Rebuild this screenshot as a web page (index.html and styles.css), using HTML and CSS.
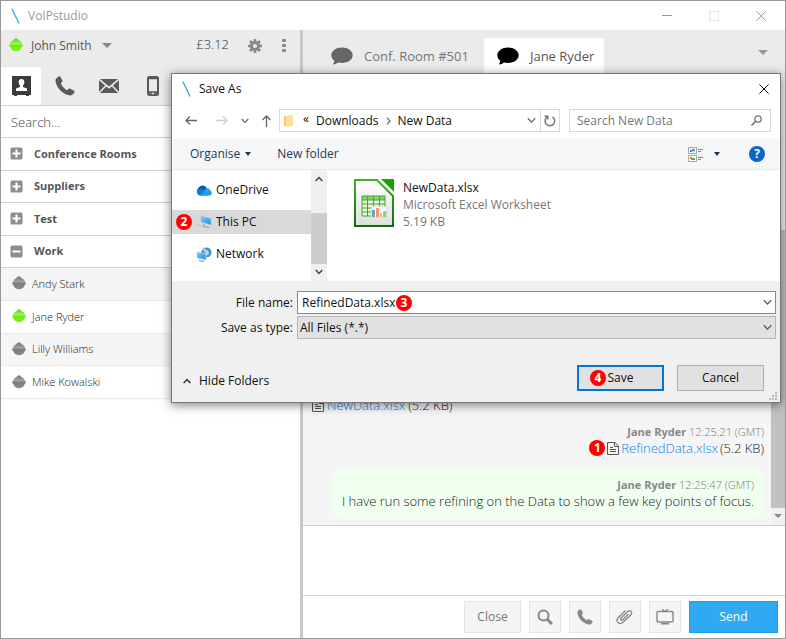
FILE: index.html
```html
<!DOCTYPE html>
<html lang="en">
<head>
<meta charset="utf-8">
<title>VoIPstudio</title>
<link rel="stylesheet" href="styles.css">
</head>
<body>
<svg class="defs" aria-hidden="true">
  <defs>
    <linearGradient id="grey-orb" x1="0" y1="0" x2="0" y2="1"><stop offset="0" stop-color="#777"/><stop offset=".42" stop-color="#a2a2a2"/><stop offset=".55" stop-color="#7c7c7c"/><stop offset="1" stop-color="#8c8c8c"/></linearGradient>
    <linearGradient id="green-orb" x1="0" y1="0" x2="0" y2="1"><stop offset="0" stop-color="#5fcf1c"/><stop offset=".42" stop-color="#9cf562"/><stop offset=".55" stop-color="#6aec08"/><stop offset="1" stop-color="#7df320"/></linearGradient>
    <linearGradient id="sheet" x1="0" y1="0" x2="0" y2="1"><stop offset="0" stop-color="#fff"/><stop offset="1" stop-color="#dedede"/></linearGradient>
    <linearGradient id="sheet-edge" x1="0" y1="0" x2="0" y2="1"><stop offset="0" stop-color="#43b02a"/><stop offset="1" stop-color="#0e6b0e"/></linearGradient>
    <linearGradient id="screen" x1="0" y1="0" x2="1" y2="1"><stop offset="0" stop-color="#6fd0ff"/><stop offset="1" stop-color="#1e8fe0"/></linearGradient>
    <symbol id="orb" viewBox="0 0 14 15"><path d="M5.700 .5H8.300L9.200 1.800 11.800 3.600 14 7.300 12.500 9.500A5.900 5.900 0 0 1 1.500 9.500L0 7.300 2.200 3.600 4.800 1.800Z"/></symbol>
    <symbol id="bubble" viewBox="0 0 22 18"><path d="M11 .5C17 .5 21.700 4 21.700 8.300S17 16 11 16C9.600 16 8.200 15.800 7 15.500 5.600 16.800 3.900 17.500 1.600 17.500 2.700 16.500 3.200 15.300 3.200 13.700 1.400 12.300.3 10.400.3 8.300.3 4 5 .5 11 .5Z"/></symbol>
    <symbol id="phone" viewBox="0 0 20 20"><path d="M3.500.7C4.400.1 5 .3 5.500 1.100L7.300 4.300C7.700 5 7.600 5.600 7 6.100L5.900 7C6.500 9.700 9.500 13 12.300 14.200L13.300 13C13.800 12.400 14.400 12.300 15.100 12.700L18.700 14.600C19.500 15.100 19.700 15.700 19.300 16.500 18.400 18.500 16.300 19.700 14 19.300 7 17.800.9 11 .5 4.500.4 2.800 1.800 1.400 3.500.7Z"/></symbol>
    <symbol id="file" viewBox="0 0 12 13"><path d="M1 .5H8L11.500 4V12.500H.5V.5H2M7.500 1V4.500H11M3 5.500H6M3 7.500H9M3 9.500H9" fill="none" stroke="#555"/></symbol>
    <symbol id="slash" viewBox="0 0 9 16"><path d="M.8.5 8 15.500" stroke="#2daede" stroke-width="1.300"/></symbol>
    <symbol id="chev" viewBox="0 0 8 6"><path d="M.7 1 4 4.500 7.300 1" fill="none" stroke="currentColor" stroke-width="1.100"/></symbol>
    <symbol id="cross" viewBox="0 0 10 10"><path d="M.4.4 9.600 9.600M9.600.4.4 9.600" stroke="currentColor"/></symbol>
    <symbol id="plus" viewBox="0 0 13 13"><rect x=".5" y=".5" width="12" height="12" rx="1.500" fill="#8d8d8d"/><path d="M6.500 2.500V10.500M2.500 6.500H10.500" stroke="#fff" stroke-width="2"/></symbol>
    <symbol id="minus" viewBox="0 0 13 13"><rect x=".5" y=".5" width="12" height="12" rx="1.500" fill="#8d8d8d"/><path d="M2.500 6.500H10.500" stroke="#fff" stroke-width="2"/></symbol>
  </defs>
</svg>

<div class="window">
  <header class="titlebar">
    <svg width="9" height="16"><use href="#slash"/></svg>
    <h1>VoIPstudio</h1>
    <div class="window-controls">
      <button aria-label="Minimise"><svg width="10" height="10"><path d="M0 4.500H10" stroke="#999"/></svg></button>
      <button aria-label="Maximise"><svg width="10" height="10"><rect x=".5" y=".5" width="9" height="9" fill="none" stroke="#e4e4e4"/></svg></button>
      <button aria-label="Close window"><svg width="10" height="10"><use href="#cross"/></svg></button>
    </div>
  </header>

  <div class="columns">
    <aside class="sidebar">
      <div class="account">
        <svg width="14" height="15" fill="url(#green-orb)"><use href="#orb"/></svg>
        <button class="account-name">John Smith <svg width="10" height="5"><path d="M0 0H10L5 5Z" fill="#888"/></svg></button>
        <span class="balance">£3.12</span>
        <button class="gear" aria-label="Settings"><svg width="14" height="14" viewBox="0 0 14 14"><circle cx="7" cy="7" r="3.600" fill="none" stroke="#888" stroke-width="3"/><path d="M7 0V3M7 11V14M0 7H3M11 7H14M2 2 4 4M10 10 12 12M12 2 10 4M4 10 2 12" stroke="#888" stroke-width="2.600"/></svg></button>
        <button aria-label="More"><svg width="4" height="13" fill="#888"><rect width="4" height="3" rx="1"/><rect y="5" width="4" height="3" rx="1"/><rect y="10" width="4" height="3" rx="1"/></svg></button>
      </div>
      <nav class="modes">
        <button class="active" aria-label="Contacts"><svg width="19" height="20" viewBox="0 0 19 20"><path d="M0 0H19V19H17V20H14V19H5V20H2V19H0Z" fill="#3b3b3b"/><path d="M9.500 3C11.700 3 12.600 4.600 12.300 6.700 12.100 8 11.600 8.800 11 9.500V11L15 12.600V15H4V12.600L8 11V9.500C7.400 8.800 6.900 8 6.700 6.700 6.400 4.600 7.300 3 9.500 3Z" fill="#fff"/></svg></button>
        <button aria-label="Calls"><svg width="20" height="20" fill="#5a5a5a"><use href="#phone"/></svg></button>
        <button aria-label="Messages"><svg width="20" height="14" viewBox="0 0 20 14"><path d="M1 0H19L10 7.500ZM0 1.200 6.200 6.600 0 12.800ZM20 1.200V12.800L13.800 6.600ZM7.200 7.500 10 9.800 12.800 7.500 19 14H1Z" fill="#5a5a5a"/></svg></button>
        <button aria-label="Mobile"><svg width="12" height="20" viewBox="0 0 12 20"><rect x="1" y="1" width="10" height="18" rx="1.500" fill="none" stroke="#5a5a5a" stroke-width="2"/><path d="M1 2H11M1 16.500H11" stroke="#5a5a5a" stroke-width="2.500"/><circle cx="6" cy="17.500" r="1" fill="#ddd"/></svg></button>
      </nav>
      <input class="contact-search" type="search" placeholder="Search..." aria-label="Search contacts">
      <ul class="groups">
        <li><button><svg width="13" height="13"><use href="#plus"/></svg>Conference Rooms</button></li>
        <li><button><svg width="13" height="13"><use href="#plus"/></svg>Suppliers</button></li>
        <li><button><svg width="13" height="13"><use href="#plus"/></svg>Test</button></li>
        <li><button><svg width="13" height="13"><use href="#minus"/></svg>Work</button></li>
      </ul>
      <ul class="contacts">
        <li><svg width="14" height="15" fill="url(#grey-orb)"><use href="#orb"/></svg>Andy Stark</li>
        <li><svg width="14" height="15" fill="url(#green-orb)"><use href="#orb"/></svg>Jane Ryder</li>
        <li><svg width="14" height="15" fill="url(#grey-orb)"><use href="#orb"/></svg>Lilly Williams</li>
        <li><svg width="14" height="15" fill="url(#grey-orb)"><use href="#orb"/></svg>Mike Kowalski</li>
      </ul>
    </aside>

    <main class="conversation">
      <nav class="tabs">
        <button><svg width="22" height="18" fill="#666"><use href="#bubble"/></svg>Conf. Room #501</button>
        <button class="active"><svg width="22" height="18"><use href="#bubble"/></svg>Jane Ryder</button>
        <button class="more-tabs" aria-label="More tabs"><svg width="10" height="5"><path d="M0 0H10L5 5Z" fill="#999"/></svg></button>
      </nav>
      <div class="chat">
        <div class="messages">
          <p class="incoming"><svg width="12" height="13"><use href="#file"/></svg><a href="#">NewData.xlsx</a> (5.2 KB)</p>
          <article class="outgoing">
            <p class="meta"><b>Jane Ryder</b> 12:25:21 (GMT)</p>
            <p class="attachment"><span class="step">1</span><svg width="12" height="13"><use href="#file"/></svg><a href="#">RefinedData.xlsx</a> (5.2 KB)</p>
          </article>
          <article class="outgoing speech">
            <p class="meta"><b>Jane Ryder</b> 12:25:47 (GMT)</p>
            <p>I have run some refining on the Data to show a few key points of focus.</p>
          </article>
        </div>
        <div class="chat-scroll"><div></div><svg width="8" height="4"><path d="M0 0H8L4 4Z" fill="#888"/></svg></div>
      </div>
      <textarea class="compose" aria-label="Message"></textarea>
      <footer class="actions">
        <button class="close">Close</button>
        <button aria-label="Search"><svg width="16" height="16"><circle cx="6.500" cy="6.500" r="5" fill="none" stroke="#888" stroke-width="2"/><path d="M10 10 15 15" stroke="#888" stroke-width="3"/></svg></button>
        <button aria-label="Call"><svg width="16" height="16" fill="#888"><use href="#phone"/></svg></button>
        <button aria-label="Attach"><svg width="18" height="16" viewBox="0 0 18 16" fill="none" stroke="#888" stroke-width="1.300"><path d="M12.500 5 6.800 10.700C5.500 12 3.800 10.400 5.100 9L11.700 2.500C14 .4 17 3.400 14.900 5.700L7 13.300C3.500 16.500-1 12.400 2.200 8.800L9.500 1.500"/></svg></button>
        <button aria-label="Share screen"><svg width="18" height="16" viewBox="0 0 18 16" fill="none" stroke="#888" stroke-width="1.400"><rect x="1" y="2.500" width="16" height="10.500" rx="1"/><path d="M6 0 9 2.500 12 0M5 14.800H13"/></svg></button>
        <button class="send">Send</button>
      </footer>
    </main>
  </div>

  <section class="dialog" role="dialog" aria-labelledby="dialog-title">
    <header class="dialog-title">
      <svg width="9" height="16"><use href="#slash"/></svg>
      <h2 id="dialog-title">Save As</h2>
      <button aria-label="Close dialog"><svg width="10" height="10"><use href="#cross"/></svg></button>
    </header>
    <div class="location">
      <button aria-label="Back"><svg width="12" height="9"><path d="M5 .5 1 4.500 5 8.500M1 4.500H12" fill="none" stroke="#666" stroke-width="1.300"/></svg></button>
      <button aria-label="Forward"><svg width="12" height="9"><path d="M7 .5 11 4.500 7 8.500M11 4.500H0" fill="none" stroke="#ccc" stroke-width="1.300"/></svg></button>
      <button aria-label="Recent"><svg width="8" height="6"><use href="#chev"/></svg></button>
      <button aria-label="Up"><svg width="9" height="12"><path d="M.5 5 4.500 1 8.500 5M4.500 1V12" fill="none" stroke="#666" stroke-width="1.300"/></svg></button>
      <div class="address">
        <svg width="10" height="12"><path d="M0 1H6V11H0Z" fill="#f5c95b"/><path d="M2 1 5 0H9V11L4 12H2Z" fill="#ffe19a"/></svg>
        <span class="hops">«</span>
        <a href="#">Downloads</a>
        <svg class="hop" width="5" height="8"><path d="M1 .7 4 4 1 7.300" fill="none" stroke="#666" stroke-width="1.200"/></svg>
        <a href="#">New Data</a>
        <button class="history" aria-label="Previous locations"><svg width="9" height="7"><use href="#chev"/></svg></button>
        <button class="refresh" aria-label="Refresh"><svg width="12" height="12" fill="none" stroke="#777" stroke-width="1.500"><path d="M8.500 1.900A4.800 4.800 0 1 1 3 2.100M.5 1.200H3.800V4.500"/></svg></button>
      </div>
      <div class="file-search">
        <input type="text" placeholder="Search New Data" aria-label="Search New Data">
        <svg width="11" height="11" fill="none" stroke="#777"><circle cx="7" cy="4" r="3.200" stroke-width="1.300"/><path d="M4.800 6.200.5 10.500" stroke-width="1.600"/></svg>
      </div>
    </div>
    <div class="commands">
      <button>Organise <svg width="6" height="4"><path d="M0 0H6L3 4Z" fill="#1b3358"/></svg></button>
      <button>New folder</button>
      <button class="views" aria-label="Change view"><svg width="15" height="15" viewBox="0 0 15 15"><g fill="#fff" stroke="#aaa"><rect x=".5" y=".5" width="8" height="6"/><rect x=".5" y="8.500" width="8" height="6"/></g><path d="M2 4.500H7V2H4Z" fill="#46a5e8"/><path d="M2 3 4 5H2Z" fill="#1862b1"/><path d="M2 10H4V12H2Z" fill="#e46b2d"/><path d="M4 11H7V13H3Z" fill="#4eaf3e"/><path d="M10 2.500H15M10 4.500H13M10 10.500H15M10 12.500H13" stroke="#888"/></svg></button>
      <button class="view-menu" aria-label="View options"><svg width="6" height="4"><path d="M0 0H6L3 4Z" fill="#1b3358"/></svg></button>
      <button class="help" aria-label="Help">?</button>
    </div>
    <div class="browser">
      <ul class="places">
        <li><svg width="16" height="11" viewBox="0 0 16 11"><path d="M4 10A4 4 0 0 1 2 3.500C3 1 8-2 11 3.500Z" fill="#0a56b0"/><path d="M3 10.500A3.500 3.500 0 0 1 3.500 4C6 3 9 5 13 10.500Z" fill="#1279d2"/><path d="M8 6C10 2 14 3 14 5.500 16.500 6 16.500 10.500 13.500 10.500H4Z" fill="#249de8"/></svg>OneDrive</li>
        <li class="selected"><span class="step">2</span><svg width="16" height="14" viewBox="0 0 16 14"><path d="M5 1 15 3.500V10L5 7Z" fill="url(#screen)" stroke="#acc5d5" stroke-width=".7"/><path d="M8 9V11.500L13 12.500" stroke="#8a949a" fill="none"/><path d="M0 9 7 12M2 8.500 9 12.500" stroke="#c1c9cd"/></svg>This PC</li>
        <li><svg width="16" height="15" viewBox="0 0 16 15"><circle cx="10.500" cy="5.500" r="5" fill="#4290bd"/><path d="M7 2C10 0 9 4 12 3L13 7 10 9Z" fill="#add7e8"/><path d="M1 5 10 7V13L1 11Z" fill="url(#screen)" stroke="#c0dae8" stroke-width=".7"/><path d="M3 13.500 8 14.500" stroke="#789"/></svg>Network</li>
      </ul>
      <div class="places-scroll">
        <svg width="8" height="6"><path d="M.7 5 4 1.500 7.300 5" fill="none" stroke="#444" stroke-width="1.500"/></svg>
        <div></div>
        <svg width="8" height="6"><path d="M.7 1 4 4.500 7.300 1" fill="none" stroke="#444" stroke-width="1.500"/></svg>
      </div>
      <div class="files">
        <svg width="40" height="48" viewBox="0 0 40 48"><path d="M1 1H23L39 17V47H1Z" fill="url(#sheet)" stroke="url(#sheet-edge)" stroke-width="2"/><path d="M27 0H40V13Z" fill="#18a303"/><path d="M8 17H31V37H8Z" fill="#e7f8df"/><path d="M8 17H31V21H8Z" fill="#8bd36f"/><path d="M8 17H31V37H8ZM13.500 17V37M19.500 17V37M25.500 17V37M8 21H31M8 25H31M8 29H31M8 33H31" fill="none" stroke="#43a52a"/><rect x="17.500" y="27.500" width="15" height="11" fill="#fff" stroke="#ddd"/><path d="M18 31H21V38H18Z" fill="#729fcf"/><path d="M22 29H25V38H22Z" fill="#ef9a72"/><path d="M26 34H28V38H26Z" fill="#f3bd3f"/><path d="M29 32H32V38H29Z" fill="#8bd36f"/></svg>
        <div class="file-text">
          <p class="file-name">NewData.xlsx</p>
          <p>Microsoft Excel Worksheet</p>
          <p>5.19 KB</p>
        </div>
      </div>
    </div>
    <form class="save-form">
      <div class="fields">
        <label for="file-name">File name:</label>
        <div class="combo">
          <input id="file-name" type="text" value="RefinedData.xlsx">
          <span class="step">3</span>
          <svg width="9" height="7"><use href="#chev"/></svg>
        </div>
        <label for="file-type">Save as type:</label>
        <div class="combo type">
          <select id="file-type"><option>All Files (*.*)</option></select>
          <svg width="9" height="7"><use href="#chev"/></svg>
        </div>
      </div>
      <div class="buttons">
        <button type="button" class="hide"><svg width="8" height="6"><path d="M.7 5 4 1.500 7.300 5" fill="none" stroke="#333" stroke-width="1.500"/></svg>Hide Folders</button>
        <button type="button" class="push primary"><span class="step">4</span>Save</button>
        <button type="button" class="push">Cancel</button>
      </div>
      <svg class="grip" width="9" height="9" fill="#b8b8b8"><path d="M6 0H8V2H6ZM3 3H5V5H3ZM6 3H8V5H6ZM0 6H2V8H0ZM3 6H5V8H3ZM6 6H8V8H6Z"/></svg>
    </form>
  </section>
</div>
</body>
</html>
```
FILE: styles.css
```css
* { box-sizing: border-box; }
body { margin: 0; font: 12px/16px "Open Sans", "Noto Sans", sans-serif; color: #555; }
h1, h2, p, ul { margin: 0; padding: 0; font: inherit; }
ul { list-style: none; }
button { display: flex; align-items: center; justify-content: center; padding: 0; border: 0; background: none; font: inherit; color: inherit; }
input, select, textarea { font: inherit; color: inherit; border: 0; border-radius: 0; outline: 0; min-width: 0; }
svg { display: block; flex: none; }
a { text-decoration: none; color: inherit; }
.defs { position: absolute; width: 0; height: 0; }

.window { position: relative; display: flex; flex-direction: column; height: 100vh; border: 1px solid #999; background: #fff; overflow: hidden; }
.titlebar { display: flex; align-items: center; height: 29px; padding: 0 19px 0 10px; gap: 8px; color: #999; flex: none; }
.window-controls { display: flex; gap: 37px; margin-left: auto; }
.columns { display: flex; flex: 1; min-height: 0; }

/* Contacts sidebar */
.sidebar { width: 302px; flex: none; border-right: 3px solid #c8c8c8; }
.account { display: flex; align-items: center; height: 37px; padding: 0 14px 6px 8px; background: #ebebeb; }
.account-name { gap: 10px; margin-left: 8px; }
.balance { margin-left: auto; font-size: 13px; font-weight: 300; padding-bottom: 4px; color: #333; }
.gear { margin: 0 20px 0 19px; }
.modes { display: flex; gap: 4px; background: #ebebeb; border-bottom: 1px solid #d0d0d0; }
.modes button { width: 40px; height: 38px; }
.modes .active { background: #fff; }
.contact-search { display: block; width: 100%; height: 32px; padding: 0 10px; font-size: 13px; font-weight: 300; border-bottom: 1px solid #d0d0d0; appearance: none; background: #fff; }
.contact-search::placeholder { color: #444; }
.groups { display: grid; grid-template-rows: repeat(4, 1fr); min-height: 130px; font-size: 11px; font-weight: 700; }
.groups li { display: flex; border-bottom: 1px solid #d0d0d0; }
.groups button { gap: 11px; padding: 0 10px 0 9px; }
.contacts { display: grid; grid-template-rows: repeat(4, 1fr); min-height: 131px; font-size: 11px; font-weight: 300; color: #222; }
.contacts li { display: flex; align-items: center; gap: 6px; padding: 0 11px; border-bottom: 1px solid #eaeaea; }
.contacts li:nth-child(odd) { background: #f5f5f5; }

/* Conversation */
.conversation { display: flex; flex-direction: column; flex: 1; min-width: 0; }
.tabs { display: flex; padding: 8px 17px 0 18px; background: #ebebeb; font-size: 13px; }
.tabs button { gap: 11px; height: 36px; padding: 0 10px 0 13px; }
.tabs button:first-child { padding: 0 15px 0 10px; color: #777; }
.tabs .active { background: #fff; }
.tabs .more-tabs { margin-left: auto; padding: 0 0 8px; }
.chat { display: flex; flex: 1; min-height: 0; background: #f5f5f5; border-bottom: 1px solid #d0d0d0; }
.messages { display: flex; flex-direction: column; justify-content: flex-end; flex: 1; padding: 0 7px 6px 9px; font-size: 13px; font-weight: 300; color: #222; overflow: hidden; }
.messages a { color: #007ff0; }
.messages .incoming { display: flex; align-items: center; gap: 3px; }
.messages article { align-self: flex-end; text-align: right; }
.incoming { margin-bottom: 11px; }
.meta { font-size: 11px; color: #777; }
.meta b { font-weight: 700; color: #888; }
.attachment { display: flex; align-items: center; justify-content: flex-end; gap: 2px; }
.speech { margin-top: 11px; padding: 10px; border-radius: 10px; background: #f0fff0; }
.chat-scroll { display: flex; flex-direction: column; align-items: center; width: 14px; padding: 156px 0 7px; background: #f1f1f1; gap: 6px; }
.chat-scroll div { flex: 1; width: 14px; background: #c1c1c1; }
.compose { height: 69px; padding: 8px; resize: none; flex: none; }
.actions { display: flex; gap: 8px; justify-content: flex-end; padding: 5px 7px; border-top: 1px solid #d0d0d0; flex: none; }
.actions button { width: 32px; height: 32px; border: 1px solid #e4e4e4; background: #f5f5f5; color: #777; }
.actions .close { width: 57px; }
.actions .send { width: 89px; background: #2eaaf5; border-color: #189fee; color: #fff; }

/* Numbered step markers */
.step { display: inline-flex; align-items: center; justify-content: center; flex: none; width: 16px; height: 16px; border-radius: 50%; background: #f00; color: #fff; font-size: 12px; font-weight: 700; }

/* Save dialog */
.dialog { position: absolute; left: 170px; top: 72px; right: 4px; border: 1px solid #777; background: #fff; color: #111; box-shadow: 0 2px 10px rgba(0, 0, 0, .5); }
.dialog-title { display: flex; align-items: center; gap: 8px; height: 30px; padding: 0 11px 0 10px; }
.dialog-title button { margin-left: auto; }
.location { display: flex; align-items: center; height: 35px; padding: 0 9px 2px 13px; color: #666; }
.location > button { margin-right: 13px; }
.location > button:first-child { margin-right: 19px; }
.location > button:nth-child(4) { margin-right: 8px; }
.address { display: flex; align-items: center; flex: 1; height: 23px; padding-left: 4px; border: 1px solid #d9d9d9; color: #111; }
.address svg { color: #666; }
.hops { margin: 0 7px 3px 9px; }
.hop { margin: 0 7px; }
.history { margin-left: auto; width: 18px; }
.refresh { width: 19px; height: 21px; border-left: 1px solid #d9d9d9; }
.file-search { display: flex; align-items: center; flex: none; width: 202px; margin-left: 9px; height: 23px; padding: 0 8px 0 7px; border: 1px solid #d9d9d9; }
.file-search input { flex: 1; padding: 0; }
.file-search input::placeholder { color: #777; }
.commands { display: flex; align-items: center; height: 31px; padding: 0 15px 0 18px; background: #f5f6f7; border-bottom: 1px solid #e8e8ea; color: #1e395b; }
.commands button { gap: 5px; margin-right: 26px; }
.commands .views { margin: 0 11px 0 auto; }
.commands .view-menu { margin-right: 29px; }
.commands .help { width: 16px; height: 16px; margin: 0; border-radius: 50%; background: #0a66c9; color: #fff; font-weight: 700; }
.browser { display: flex; height: 111px; }
.places { width: 139px; padding-top: 8px; }
.places li { display: flex; align-items: center; gap: 4px; height: 24px; margin-bottom: 8px; padding-left: 24px; }
.places .selected { padding-left: 4px; background: #d9d9d9; }
.places-scroll { display: flex; flex-direction: column; align-items: center; justify-content: space-between; width: 16px; padding: 6px 0; background: #f0f0f0; }
.places-scroll div { width: 16px; height: 51px; margin-top: 25px; background: #cdcdcd; }
.files { display: flex; gap: 9px; padding: 9px 27px; color: #777; }
.file-text { line-height: 17px; }
.file-name { color: #111; }
.save-form { position: relative; padding: 10px 4px 11px 10px; background: #f0f0f0; }
.fields { display: grid; grid-template-columns: 111px 1fr; gap: 2px 4px; align-items: center; }
.fields label { text-align: right; white-space: nowrap; }
.combo { position: relative; display: flex; align-items: center; height: 23px; border: 1px solid #888; background: #fff; color: #111; }
.combo input, .combo select { width: 100%; height: 21px; padding: 0 4px; background: none; }
.combo select { appearance: none; padding: 0 2px; }
.combo svg { position: absolute; right: 3px; color: #555; }
.combo .step { position: absolute; left: 98px; }
.combo.type { background: #e1e1e1; border-color: #b5b5b5; }
.buttons { display: flex; gap: 13px; margin-top: 26px; padding-right: 12px; }
.hide { gap: 8px; margin-right: auto; padding: 6px 0 0 1px; }
.push { position: relative; width: 87px; height: 26px; border: 1px solid #adadad; background: #e1e1e1; }
.primary { border: 2px solid #0078d7; }
.primary .step { position: absolute; left: 11px; }
.grip { position: absolute; right: 2px; bottom: 1px; }
```
